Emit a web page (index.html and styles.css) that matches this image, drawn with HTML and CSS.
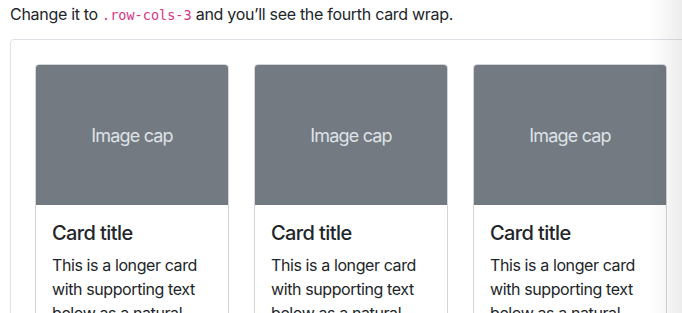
FILE: index.html
```html
<!DOCTYPE html>
<html lang="en">
<head>
  <meta charset="UTF-8">
  <meta name="viewport" content="width=device-width, initial-scale=1.0">
  <title>Grid cards</title>
  <link rel="stylesheet" href="styles.css">
</head>
<body>
  <p class="intro">Change it to <code>.row-cols-3</code> and you’ll see the fourth card wrap.</p>

  <div class="example">
    <div class="row">
      <div class="card">
        <div class="card-img">Image cap</div>
        <div class="card-body">
          <h5 class="card-title">Card title</h5>
          <p class="card-text">This is a longer card with supporting text below as a natural lead-in to additional content. This content is a little bit longer.</p>
        </div>
      </div>
      <div class="card">
        <div class="card-img">Image cap</div>
        <div class="card-body">
          <h5 class="card-title">Card title</h5>
          <p class="card-text">This is a longer card with supporting text below as a natural lead-in to additional content. This content is a little bit longer.</p>
        </div>
      </div>
      <div class="card">
        <div class="card-img">Image cap</div>
        <div class="card-body">
          <h5 class="card-title">Card title</h5>
          <p class="card-text">This is a longer card with supporting text below as a natural lead-in to additional content.</p>
        </div>
      </div>
    </div>
  </div>

  <div class="scroll-shade"></div>
</body>
</html>
```

FILE: styles.css
```css
* {
  box-sizing: border-box;
}
html, body {
  overflow: hidden;
}
body {
  font-family: Inter, "Noto Sans", sans-serif;
  font-size: 16px;
  line-height: 1.5;
  letter-spacing: -0.4px;
  color: #212529;
  background-color: #fff;
  margin: 0;
  padding: 0 10px;
}
.intro {
  margin: 2px 0 13px;
  letter-spacing: -0.3px;
}
code {
  font-family: "DejaVu Sans Mono", "Liberation Mono", monospace;
  font-size: 13.5px;
  letter-spacing: 0;
  color: #d63384;
}
.example {
  width: 680px;
  padding: 24px;
  border: 1px solid #dee2e6;
  border-radius: 4px;
}
.row {
  display: flex;
  gap: 25px;
}
.card {
  width: 194px;
  flex: none;
  border: 1px solid #d3d5d8;
  border-radius: 4px;
  overflow: hidden;
}
.card-img {
  height: 140px;
  display: flex;
  align-items: center;
  justify-content: center;
  background-color: #737a82;
  color: #dee2e6;
  font-size: 18px;
  letter-spacing: -0.8px;
}
.card-body {
  padding: 16px;
}
.card-title {
  margin: 0 0 8px;
  font-size: 20px;
  font-weight: 500;
  line-height: 1.2;
  letter-spacing: -0.6px;
}
.card-text {
  margin: 0;
}
.scroll-shade {
  position: fixed;
  top: 0;
  right: 0;
  width: 32px;
  height: 100%;
  background: linear-gradient(to right, rgba(0, 0, 0, 0), rgba(0, 0, 0, 0.07));
  pointer-events: none;
}
```
